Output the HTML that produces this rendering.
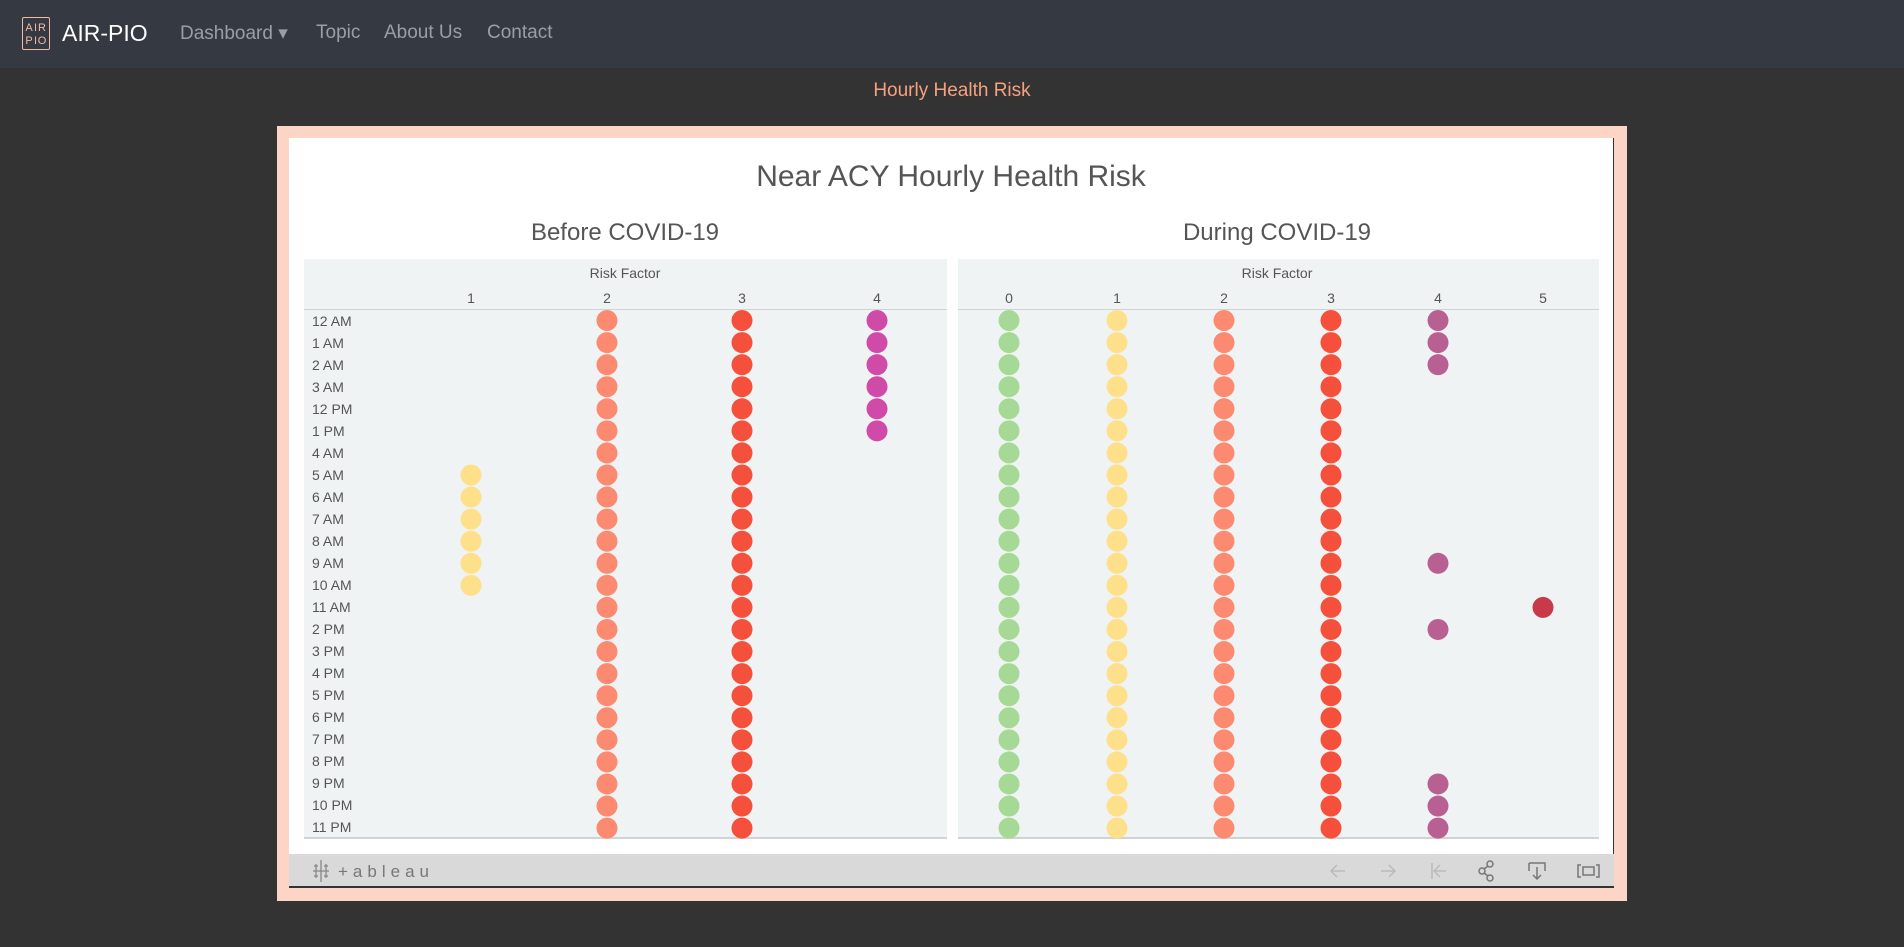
<!DOCTYPE html>
<html><head><meta charset="utf-8"><style>
*{margin:0;padding:0;box-sizing:border-box}
body{width:1904px;height:947px;background:#333333;font-family:"Liberation Sans",sans-serif;position:relative;overflow:hidden}
.nav{position:absolute;left:0;top:0;width:1904px;height:68px;background:#353a42}
.nav span{position:absolute;top:22px;font-size:19px;color:#9b9ea2}
.brand{position:absolute;left:62px;top:20px;font-size:23px;color:#fff}
.logo{position:absolute;left:22px;top:17px;width:28px;height:33px;border:1.5px solid #f0b9a3;border-radius:2px}
.sub{position:absolute;left:0;width:1904px;top:80px;text-align:center;color:#f4a27f;font-size:19px}
.frame{position:absolute;left:277px;top:126px;width:1350px;height:775px;background:#fdd5c7}
.white{position:absolute;left:289px;top:138px;width:1325px;height:750px;background:#fff;border-right:1px solid #333}
.tb{position:absolute;left:289px;top:854px;width:1325px;height:34px;background:#d9d9d9;border-bottom:2px solid #333}
svg text{font-family:"Liberation Sans",sans-serif}
</style></head><body>
<div class="nav">
<div class="logo"><svg width="25" height="30" viewBox="0 0 25 30"><g font-family="Liberation Sans Narrow,Liberation Sans,sans-serif" font-size="11" fill="#f0b9a3" text-anchor="middle"><text x="6" y="13">A</text><text x="12.5" y="13">I</text><text x="19" y="13">R</text><text x="6" y="26">P</text><text x="12.5" y="26">I</text><text x="19" y="26">O</text></g></svg></div>
<div class="brand">AIR-PIO</div>
<span style="left:180px">Dashboard ▾</span>
<span style="left:316px">Topic</span>
<span style="left:384px">About Us</span>
<span style="left:487px">Contact</span>
</div>
<div class="sub">Hourly Health Risk</div>
<div class="frame"></div>
<div class="white"></div>
<svg id="s" style="position:absolute;left:0;top:0" width="1904" height="947">
<text x="951" y="186" text-anchor="middle" font-size="30" fill="#555">Near ACY Hourly Health Risk</text>
<text x="625" y="240" text-anchor="middle" font-size="24" fill="#555">Before COVID-19</text>
<text x="1277" y="240" text-anchor="middle" font-size="24" fill="#555">During COVID-19</text>
<rect x="304" y="259" width="643" height="579" fill="#f0f3f4"/>
<rect x="958" y="259" width="641" height="579" fill="#f0f3f4"/>
<line x1="304" y1="309.5" x2="947" y2="309.5" stroke="#d0d3d5"/>
<line x1="958" y1="309.5" x2="1599" y2="309.5" stroke="#d0d3d5"/>
<line x1="304" y1="838" x2="947" y2="838" stroke="#d0d3d5" stroke-width="2"/>
<line x1="958" y1="838" x2="1599" y2="838" stroke="#d0d3d5" stroke-width="2"/>
<g font-size="14" fill="#555" text-anchor="middle">
<text x="625" y="278">Risk Factor</text><text x="1277" y="278">Risk Factor</text>
<text x="471" y="303">1</text><text x="607" y="303">2</text><text x="742" y="303">3</text><text x="877" y="303">4</text>
<text x="1009" y="303">0</text><text x="1117" y="303">1</text><text x="1224" y="303">2</text><text x="1331" y="303">3</text><text x="1438" y="303">4</text><text x="1543" y="303">5</text>
</g>
<g font-size="14" fill="#555">
<text x="312" y="326">12 AM</text><text x="312" y="348">1 AM</text><text x="312" y="370">2 AM</text><text x="312" y="392">3 AM</text><text x="312" y="414">12 PM</text><text x="312" y="436">1 PM</text><text x="312" y="458">4 AM</text><text x="312" y="480">5 AM</text><text x="312" y="502">6 AM</text><text x="312" y="524">7 AM</text><text x="312" y="546">8 AM</text><text x="312" y="568">9 AM</text><text x="312" y="590">10 AM</text><text x="312" y="612">11 AM</text><text x="312" y="634">2 PM</text><text x="312" y="656">3 PM</text><text x="312" y="678">4 PM</text><text x="312" y="700">5 PM</text><text x="312" y="722">6 PM</text><text x="312" y="744">7 PM</text><text x="312" y="766">8 PM</text><text x="312" y="788">9 PM</text><text x="312" y="810">10 PM</text><text x="312" y="832">11 PM</text>
</g>
<g id="dots"></g>
</svg>
<div class="tb"></div>
<svg style="position:absolute;left:289px;top:854px" width="1325" height="34">
<g stroke="#888" stroke-width="1.3" fill="none"><path d="M32 6v22M24 17h16M27 10v14M37 10v14M25 12h4M35 12h4M25 22h4M35 22h4"/></g>
<text x="49" y="23" font-size="17" fill="#777" letter-spacing="5">+ableau</text>
<g stroke="#bbb" stroke-width="1.5" fill="none">
<path d="M1056 17h-14M1048 11l-6 6 6 6"/><path d="M1092 17h14M1100 11l6 6-6 6"/><path d="M1143 9v16M1157 17h-12M1151 11l-6 6 6 6"/></g>
<g stroke="#777" stroke-width="1.5" fill="none">
<circle cx="1193" cy="17" r="3"/><circle cx="1201" cy="10" r="3"/><circle cx="1201" cy="24" r="3"/><path d="M1195 15l4-3M1195 19l4 3"/>
<path d="M1240 9h16v8M1240 9v8M1248 13v12M1244 21l4 4 4-4"/>
<path d="M1292 11h-3v12h3M1307 11h3v12h-3M1294 13h11v8h-11z"/></g>
</svg>
<script>
var g=document.getElementById('dots'),h='';
function d(x,r,c){h+='<circle cx="'+x+'" cy="'+(320.5+r*22.07)+'" r="10.5" fill="'+c+'"/>';}
for(var r=0;r<24;r++){
d(607,r,'#fc8a70');d(742,r,'#f4503b');
if(r<6)d(877,r,'#d04aa8');
if(r>=7&&r<=12)d(471,r,'#fee08b');
d(1009,r,'#a6d995');d(1117,r,'#fee08b');d(1224,r,'#fc8a70');d(1331,r,'#f4503b');
if([0,1,2,11,14,21,22,23].indexOf(r)>=0)d(1438,r,'#b96093');
if(r==13)d(1543,r,'#c83a4a');
}
g.innerHTML=h;
</script>
</body></html>
